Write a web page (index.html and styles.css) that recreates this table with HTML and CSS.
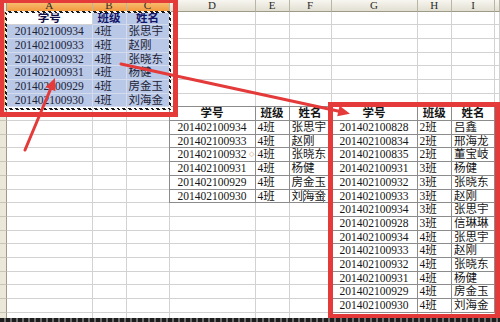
FILE: index.html
```html
<!DOCTYPE html>
<html lang="zh-CN">
<head>
<meta charset="utf-8">
<title>复制粘贴</title>
<link rel="stylesheet" href="styles.css">
</head>
<body>
<div class="page">
  <div class="sheet">
    <div class="r hd"><span class="rh corner"></span><span class="on">A</span><span class="on">B</span><span class="on">C</span><span>D</span><span>E</span><span>F</span><span>G</span><span>H</span><span>I</span><span></span></div>

    <div class="r"><span class="rh on"></span><span class="act c b">学号</span><span class="s c b">班级</span><span class="s c b">姓名</span><span></span><span></span><span></span><span></span><span></span><span></span><span></span></div>
    <div class="r"><span class="rh on"></span><span class="s c">201402100934</span><span class="s">4班</span><span class="s">张思宇</span><span></span><span></span><span></span><span></span><span></span><span></span><span></span></div>
    <div class="r"><span class="rh on"></span><span class="s c">201402100933</span><span class="s">4班</span><span class="s">赵刚</span><span></span><span></span><span></span><span></span><span></span><span></span><span></span></div>
    <div class="r"><span class="rh on"></span><span class="s c">201402100932</span><span class="s">4班</span><span class="s">张晓东</span><span></span><span></span><span></span><span></span><span></span><span></span><span></span></div>
    <div class="r"><span class="rh on"></span><span class="s c">201402100931</span><span class="s">4班</span><span class="s">杨健</span><span></span><span></span><span></span><span></span><span></span><span></span><span></span></div>
    <div class="r"><span class="rh on"></span><span class="s c">201402100929</span><span class="s">4班</span><span class="s">房金玉</span><span></span><span></span><span></span><span></span><span></span><span></span><span></span></div>
    <div class="r"><span class="rh on"></span><span class="s c">201402100930</span><span class="s">4班</span><span class="s">刘海金</span><span></span><span></span><span></span><span></span><span></span><span></span><span></span></div>

    <div class="r"><span class="rh"></span><span></span><span></span><span></span><span class="t tt tl c b">学号</span><span class="t tt c b">班级</span><span class="t tt c b">姓名</span><span class="t tt tl c b">学号</span><span class="t tt c b">班级</span><span class="t tt c b">姓名</span><span></span></div>
    <div class="r"><span class="rh"></span><span></span><span></span><span></span><span class="t tl c">201402100934</span><span class="t">4班</span><span class="t">张思宇</span><span class="t tl c">201402100828</span><span class="t">2班</span><span class="t">吕鑫</span><span></span></div>
    <div class="r"><span class="rh"></span><span></span><span></span><span></span><span class="t tl c">201402100933</span><span class="t">4班</span><span class="t">赵刚</span><span class="t tl c">201402100834</span><span class="t">2班</span><span class="t">邢海龙</span><span></span></div>
    <div class="r"><span class="rh"></span><span></span><span></span><span></span><span class="t tl c">201402100932</span><span class="t">4班</span><span class="t">张晓东</span><span class="t tl c">201402100835</span><span class="t">2班</span><span class="t">董宝岐</span><span></span></div>
    <div class="r"><span class="rh"></span><span></span><span></span><span></span><span class="t tl c">201402100931</span><span class="t">4班</span><span class="t">杨健</span><span class="t tl c">201402100931</span><span class="t">3班</span><span class="t">杨健</span><span></span></div>
    <div class="r"><span class="rh"></span><span></span><span></span><span></span><span class="t tl c">201402100929</span><span class="t">4班</span><span class="t">房金玉</span><span class="t tl c">201402100932</span><span class="t">3班</span><span class="t">张晓东</span><span></span></div>
    <div class="r"><span class="rh"></span><span></span><span></span><span></span><span class="t tl c">201402100930</span><span class="t">4班</span><span class="t">刘海金</span><span class="t tl c">201402100933</span><span class="t">3班</span><span class="t">赵刚</span><span></span></div>
    <div class="r"><span class="rh"></span><span></span><span></span><span></span><span class="ttop"></span><span class="ttop"></span><span class="ttop"></span><span class="t tl c">201402100934</span><span class="t">3班</span><span class="t">张思宇</span><span></span></div>
    <div class="r"><span class="rh"></span><span></span><span></span><span></span><span></span><span></span><span></span><span class="t tl c">201402100928</span><span class="t">3班</span><span class="t">信琳琳</span><span></span></div>
    <div class="r"><span class="rh"></span><span></span><span></span><span></span><span></span><span></span><span></span><span class="t tl c">201402100934</span><span class="t">4班</span><span class="t">张思宇</span><span></span></div>
    <div class="r"><span class="rh"></span><span></span><span></span><span></span><span></span><span></span><span></span><span class="t tl c">201402100933</span><span class="t">4班</span><span class="t">赵刚</span><span></span></div>
    <div class="r"><span class="rh"></span><span></span><span></span><span></span><span></span><span></span><span></span><span class="t tl c">201402100932</span><span class="t">4班</span><span class="t">张晓东</span><span></span></div>
    <div class="r"><span class="rh"></span><span></span><span></span><span></span><span></span><span></span><span></span><span class="t tl c">201402100931</span><span class="t">4班</span><span class="t">杨健</span><span></span></div>
    <div class="r"><span class="rh"></span><span></span><span></span><span></span><span></span><span></span><span></span><span class="t tl c">201402100929</span><span class="t">4班</span><span class="t">房金玉</span><span></span></div>
    <div class="r"><span class="rh"></span><span></span><span></span><span></span><span></span><span></span><span></span><span class="t tl c">201402100930</span><span class="t">4班</span><span class="t">刘海金</span><span></span></div>
    <div class="r"><span class="rh"></span><span></span><span></span><span></span><span></span><span></span><span></span><span class="ttop"></span><span class="ttop"></span><span class="ttop"></span><span></span></div>

    <div class="marquee"></div>
    <div class="tag">◇</div>
    <div class="paste"></div>
    <div class="box box1"></div>
    <div class="box box2"></div>
    <svg class="arrows" width="500" height="322" viewBox="0 0 500 322">
      <line x1="121" y1="64" x2="339" y2="111.3" />
      <polygon points="350,113.7 337.2,116.2 339.6,105.8" />
      <line x1="25" y1="150" x2="51" y2="88" />
      <polygon points="55,78 55.4,91.2 45.6,87.1" />
    </svg>
  </div>
  <div class="foot"></div>
</div>
</body>
</html>
```

FILE: styles.css
```css
* { box-sizing: border-box; }
html, body { margin: 0; padding: 0; background: #fff; }
body { width: 500px; height: 322px; overflow: hidden; }

.page { display: flex; flex-direction: column; width: 500px; height: 322px; }

.sheet {
  position: relative;
  height: 318px;
  overflow: hidden;
  font-family: "Liberation Serif", "Noto Sans CJK SC", serif;
  font-size: 11.5px;
  color: #1a1a1a;
}

.r {
  display: grid;
  grid-template-columns: 7px 85.5px 34px 43px 86px 34px 42px 86px 34.5px 43px 5px;
  height: 13.7px;
}

.r > span {
  display: block;
  border-right: 1px solid #d2d2d2;
  border-bottom: 1px solid #d2d2d2;
  padding: 0 2px;
  line-height: 12.5px;
  white-space: nowrap;
  overflow: hidden;
}

.r.hd { height: 11.6px; }
.r.hd > span {
  background: linear-gradient(#f7f6f0, #e2dfd2);
  border-right: 1px solid #b9b6a6;
  border-bottom: 1px solid #9d9a8a;
  text-align: center;
  font-size: 11px;
  line-height: 11px;
  color: #2b2b2b;
}
.r.hd > span.on { background: linear-gradient(#f9c77f, #f29a3e); }

.r > span.rh {
  padding: 0;
  background: #ebe8d9;
  border-right: 1px solid #9d9a8a;
  border-bottom: 1px solid #c9c6b6;
}
.r > span.rh.on { background: linear-gradient(90deg, #f9c77f, #f29a3e); }

.r > span.s {
  background: #b8c8e6;
  border-right-color: #d3dbec;
  border-bottom-color: #d3dbec;
  color: #1e2236;
}
.r > span.act { background: #fff; color: #10104a; }
.r > span.s.b { color: #14146a; }

.c { text-align: center; }
.b { font-weight: bold; }

.r > span.t {
  border-right-color: #8c8c8c;
  border-bottom-color: #8c8c8c;
  color: #151515;
}
.r > span.tl { box-shadow: -1px 0 0 #8c8c8c; }
.r > span.tt { box-shadow: 0 -1px 0 #8c8c8c; }
.r > span.tt.tl { box-shadow: -1px 0 0 #8c8c8c, 0 -1px 0 #8c8c8c, -1px -1px 0 #8c8c8c; }
.r > span.ttop { box-shadow: 0 -1px 0 #8c8c8c; }

.marquee {
  position: absolute;
  left: 5px;
  top: 10.5px;
  width: 166px;
  height: 99px;
  border: 2px solid transparent;
  border-image: repeating-linear-gradient(45deg, #161616 0 2px, #f4f4f4 2px 4px) 2;
}

.tag {
  position: absolute;
  left: 249px;
  top: 150px;
  font-size: 7px;
  line-height: 8px;
  color: #c9a46a;
  font-family: "DejaVu Sans", sans-serif;
}

.paste {
  position: absolute;
  left: 303px;
  top: 191px;
  width: 21px;
  height: 12px;
  border: 1px solid #7c7c7c;
}

.box {
  position: absolute;
  border: 5px solid #e43a3a;
}
.box1 { left: -1px; top: -2px; width: 179px; height: 119px; }
.box2 { left: 328px; top: 102px; width: 172px; height: 217px; }

.arrows { position: absolute; left: 0; top: 0; pointer-events: none; }
.arrows line { stroke: #e43a3a; stroke-width: 3; stroke-linecap: round; }
.arrows polygon { fill: #e43a3a; }

.foot {
  height: 4px;
  background: repeating-linear-gradient(90deg, #1e1e1e 0 4px, #6d6d6d 4px 6px);
}
```
